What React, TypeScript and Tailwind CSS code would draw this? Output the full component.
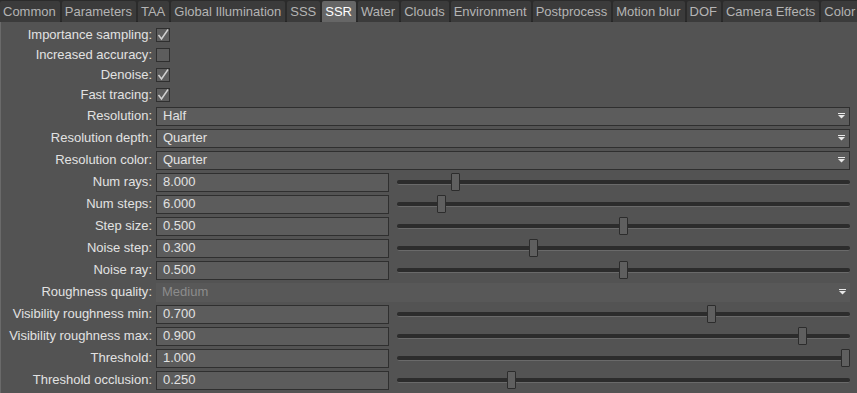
import React from 'react';

const tabs = [
    'Common', 'Parameters', 'TAA', 'Global Illumination', 'SSS', 'SSR', 'Water', 'Clouds',
    'Environment', 'Postprocess', 'Motion blur', 'DOF', 'Camera Effects', 'Color'
];

type Row =
    | { kind: 'check'; label: string; checked: boolean }
    | { kind: 'combo'; label: string; value: string; disabled?: boolean }
    | { kind: 'slider'; label: string; value: string; t: number };

const rows: Row[] = [
    { kind: 'check', label: 'Importance sampling', checked: true },
    { kind: 'check', label: 'Increased accuracy', checked: false },
    { kind: 'check', label: 'Denoise', checked: true },
    { kind: 'check', label: 'Fast tracing', checked: true },
    { kind: 'combo', label: 'Resolution', value: 'Half' },
    { kind: 'combo', label: 'Resolution depth', value: 'Quarter' },
    { kind: 'combo', label: 'Resolution color', value: 'Quarter' },
    { kind: 'slider', label: 'Num rays', value: '8.000', t: 0.122 },
    { kind: 'slider', label: 'Num steps', value: '6.000', t: 0.09 },
    { kind: 'slider', label: 'Step size', value: '0.500', t: 0.5 },
    { kind: 'slider', label: 'Noise step', value: '0.300', t: 0.297 },
    { kind: 'slider', label: 'Noise ray', value: '0.500', t: 0.5 },
    { kind: 'combo', label: 'Roughness quality', value: 'Medium', disabled: true },
    { kind: 'slider', label: 'Visibility roughness min', value: '0.700', t: 0.698 },
    { kind: 'slider', label: 'Visibility roughness max', value: '0.900', t: 0.903 },
    { kind: 'slider', label: 'Threshold', value: '1.000', t: 1 },
    { kind: 'slider', label: 'Threshold occlusion', value: '0.250', t: 0.248 },
];

function Check({ checked }: { checked: boolean }) {
    return (
        <div className="w-[14px] h-[14px] border border-[#2f2f2f] bg-[#5d5d5d] flex items-center justify-center">
            {checked && (
                <svg width="12" height="12" viewBox="0 0 12 12">
                    <path d="M1.5 6 L4.5 10 L11 0.5" fill="none" stroke="#cfcfcf" strokeWidth="1.5" />
                </svg>
            )}
        </div>
    );
}

function Arrow() {
    return (
        <svg width="7" height="6" viewBox="0 0 7 6" className="mr-[4px]">
            <rect x="0" y="0" width="7" height="1" fill="#e8e8e8" />
            <path d="M0 2 L7 2 L3.5 5.5 Z" fill="#e8e8e8" />
        </svg>
    );
}

function Slider({ t }: { t: number }) {
    return (
        <div className="relative flex-1 h-[20px] ml-[8px] mr-[7px] flex items-center">
            <div className="w-full h-[5px] rounded-[2px] bg-[#2c2c2c] border-b border-[#6a6a6a]" />
            <div
                className="absolute top-[1px] w-[9px] h-[18px] rounded-[1px] border border-[#2c2c2c] bg-[#5f5f5f]"
                style={{ left: `calc(${t * 100}% - ${t * 9}px)` }}
            />
        </div>
    );
}

export default function App() {
    return (
        <div
            className="w-[857px] h-[393px] bg-[#535353] flex flex-col overflow-hidden text-[13px] text-[#e2e2e2]"
            style={{ fontFamily: '"Liberation Sans", Arial, sans-serif' }}
        >
            {/* Tab bar */}
            <div className="h-[22px] flex bg-[#2b2b2b] border-b border-[#262626] shrink-0 whitespace-nowrap">
                {tabs.map((tab) => (
                    <div
                        key={tab}
                        className={`h-[21px] mt-[1px] mr-[2px] pl-[3px] pr-[4px] flex items-center rounded-t-[2px] ${tab === 'SSR'
                            ? 'bg-[#666666] text-white'
                            : 'bg-[#3b3b3b] text-[#b4b4b4]'
                            }`}
                    >
                        {tab}
                    </div>
                ))}
            </div>

            {/* Settings */}
            <div className="flex-1 flex flex-col pt-[3px] border-l border-[#6a6a6a]">
                {rows.map((row) => (
                    <div
                        key={row.label}
                        className={`flex items-center ${row.kind === 'check' ? 'h-[20px]' : 'h-[22px]'}`}
                    >
                        <div className="w-[155px] text-right pr-[4px] shrink-0 whitespace-nowrap">
                            {row.label}:
                        </div>
                        {row.kind === 'check' && <Check checked={row.checked} />}
                        {row.kind === 'combo' && (
                            <div
                                className={`w-[694px] h-[19px] flex items-center justify-between pl-[6px] ${row.disabled
                                    ? 'bg-[#585858] text-[#8c8c8c]'
                                    : 'bg-[#5c5c5c] border border-[#2f2f2f]'
                                    }`}
                            >
                                <span>{row.value}</span>
                                <Arrow />
                            </div>
                        )}
                        {row.kind === 'slider' && (
                            <>
                                <div className="w-[233px] h-[19px] flex items-center pl-[6px] bg-[#5c5c5c] border border-[#2f2f2f] shrink-0">
                                    {row.value}
                                </div>
                                <Slider t={row.t} />
                            </>
                        )}
                    </div>
                ))}
            </div>
        </div>
    );
}
